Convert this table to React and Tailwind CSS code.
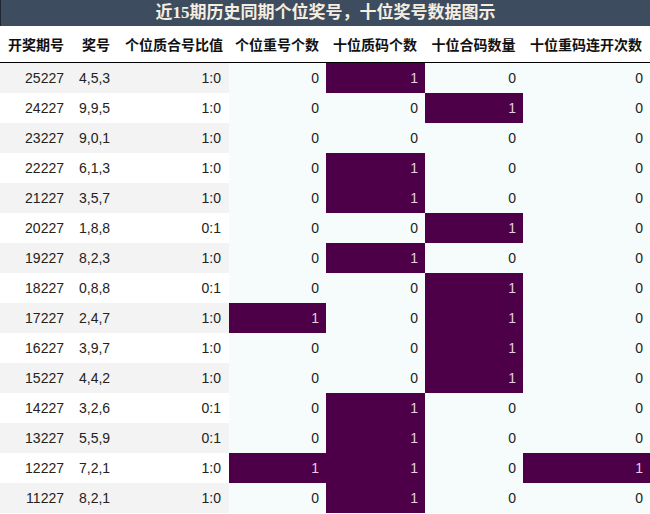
import React from "react";

const ROWS = [
    ["25227", "4,5,3", "1:0", 0, 1, 0, 0],
    ["24227", "9,9,5", "1:0", 0, 0, 1, 0],
    ["23227", "9,0,1", "1:0", 0, 0, 0, 0],
    ["22227", "6,1,3", "1:0", 0, 1, 0, 0],
    ["21227", "3,5,7", "1:0", 0, 1, 0, 0],
    ["20227", "1,8,8", "0:1", 0, 0, 1, 0],
    ["19227", "8,2,3", "1:0", 0, 1, 0, 0],
    ["18227", "0,8,8", "0:1", 0, 0, 1, 0],
    ["17227", "2,4,7", "1:0", 1, 0, 1, 0],
    ["16227", "3,9,7", "1:0", 0, 0, 1, 0],
    ["15227", "4,4,2", "1:0", 0, 0, 1, 0],
    ["14227", "3,2,6", "0:1", 0, 1, 0, 0],
    ["13227", "5,5,9", "0:1", 0, 1, 0, 0],
    ["12227", "7,2,1", "1:0", 1, 1, 0, 1],
    ["11227", "8,2,1", "1:0", 0, 1, 0, 0],
];

const HEADERS = ["开奖期号", "奖号", "个位质合号比值", "个位重号个数", "十位质码个数", "十位合码数量", "十位重码连开次数"];

const GRID = "grid grid-cols-[73px_47px_109px_97px_99px_98px_127px]";

const CountCell = ({ value }) => (
    <div
        className={
            value === 1
                ? "flex items-center justify-end pr-[7px] bg-[#4d0047] text-[#e6cde3]"
                : "flex items-center justify-end pr-[7px] bg-[#f6fbfc] text-[#222]"
        }
    >
        {value}
    </div>
);

export default function App() {
    return (
        <div className="w-[650px] h-[514px] bg-white overflow-hidden">
            {/* Title */}
            <div className="h-[26px] bg-[#3e4c5f] border-l border-[#1e2530] flex items-center justify-center text-[17px] font-bold text-[#f4efe0] [font-family:'Liberation_Serif','Noto_Sans_CJK_SC',serif]">
                近15期历史同期个位奖号，十位奖号数据图示
            </div>

            {/* Header */}
            <div className={`${GRID} h-[37px] border-b border-black text-[14px] font-bold text-[#111] [font-family:'Noto_Sans_CJK_SC',sans-serif]`}>
                {HEADERS.map((h) => (
                    <div key={h} className="flex items-center justify-center pr-[1px]">
                        {h}
                    </div>
                ))}
            </div>

            {/* Rows */}
            <div className="text-[14px] text-[#222] [font-family:'Liberation_Sans',Arial,sans-serif]">
                {ROWS.map((r, idx) => {
                    const rowBg = idx % 2 === 0 ? "bg-[#f3f3f3]" : "bg-white";
                    return (
                        <div key={r[0]} className={`${GRID} h-[30px]`}>
                            <div className={`${rowBg} flex items-center justify-end pr-[9px]`}>{r[0]}</div>
                            <div className={`${rowBg} flex items-center pl-[6px]`}>{r[1]}</div>
                            <div className={`${rowBg} flex items-center justify-end pr-[8px]`}>{r[2]}</div>
                            <CountCell value={r[3]} />
                            <CountCell value={r[4]} />
                            <CountCell value={r[5]} />
                            <CountCell value={r[6]} />
                        </div>
                    );
                })}
            </div>
        </div>
    );
}
